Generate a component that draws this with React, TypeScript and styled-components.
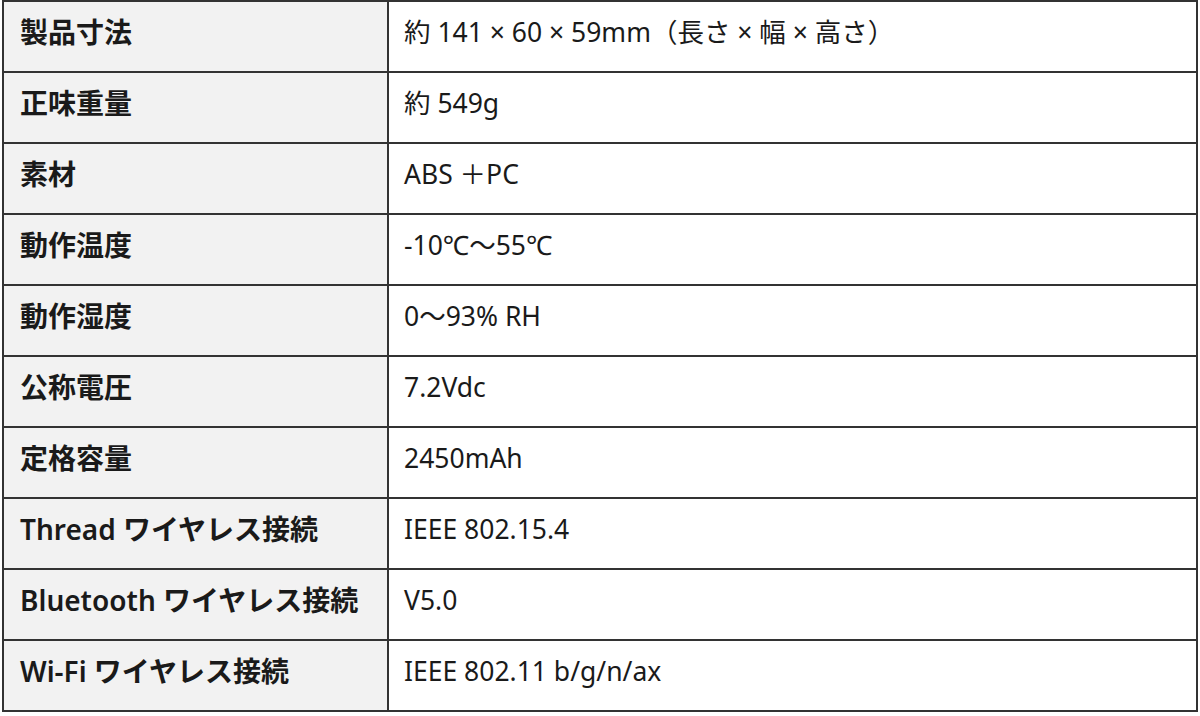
import styled, { createGlobalStyle } from "styled-components";

const GlobalStyle = createGlobalStyle`
  html, body {
    margin: 0;
    padding: 0;
    background: #ffffff;
  }
  body {
    font-family: "Noto Sans", "Noto Sans CJK JP", sans-serif;
  }
`;

const specs: [string, string][] = [
  ["製品寸法", "約 141 × 60 × 59mm（長さ × 幅 × 高さ）"],
  ["正味重量", "約 549g"],
  ["素材", "ABS ＋PC"],
  ["動作温度", "-10℃〜55℃"],
  ["動作湿度", "0〜93% RH"],
  ["公称電圧", "7.2Vdc"],
  ["定格容量", "2450mAh"],
  ["Thread ワイヤレス接続", "IEEE 802.15.4"],
  ["Bluetooth ワイヤレス接続", "V5.0"],
  ["Wi-Fi ワイヤレス接続", "IEEE 802.11 b/g/n/ax"],
];

export default function App() {
  return (
    <>
      <GlobalStyle />
      <Page>
        <SpecTable>
          <tbody>
            {specs.map(([label, value]) => (
              <Row key={label}>
                <Label>{label}</Label>
                <Value>{value}</Value>
              </Row>
            ))}
          </tbody>
        </SpecTable>
      </Page>
    </>
  );
}

const Page = styled.div`
  width: 1200px;
  height: 716px;
  padding: 0 2px;
  box-sizing: border-box;
`;

const SpecTable = styled.table`
  width: 100%;
  border-collapse: collapse;
  table-layout: fixed;
  color: #1a1a1a;
  line-height: 1.2;
`;

const Row = styled.tr`
  height: 71px;
`;

const Label = styled.td`
  width: 385px;
  box-sizing: border-box;
  background: #f2f2f2;
  border: 2px solid #333333;
  padding: 0 0 8px 16px;
  font-size: 28px;
  font-weight: 600;
  white-space: nowrap;
  vertical-align: middle;
`;

const Value = styled.td`
  background: #ffffff;
  border: 2px solid #333333;
  padding: 0 0 8px 15px;
  font-size: 26.5px;
  font-weight: 400;
  white-space: nowrap;
  vertical-align: middle;
`;
